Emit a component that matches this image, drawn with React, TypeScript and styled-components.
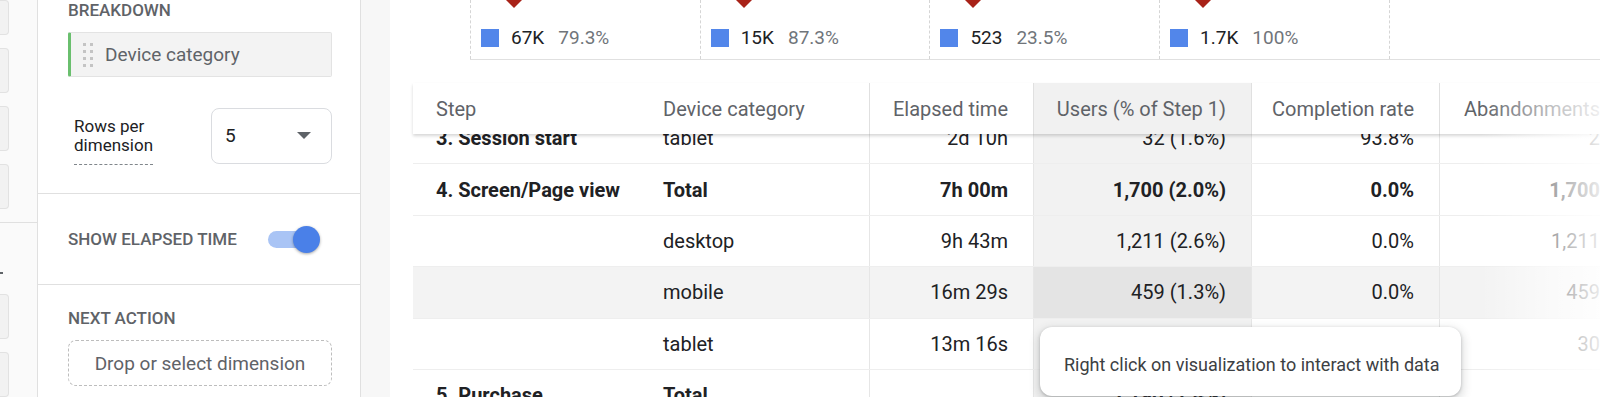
import React from 'react';
import styled, {createGlobalStyle} from 'styled-components';

const GlobalStyle = createGlobalStyle`
    html, body {
        margin: 0;
        padding: 0;
        background: #ffffff;
    }
    body {
        font-family: Roboto, "Liberation Sans", Arial, sans-serif;
        color: #202124;
        overflow: hidden;
    }
`

const PageBox = styled.div`
    display: flex;
    width: 1600px;
    height: 397px;
    overflow: hidden;
`

// far left rail with the clipped variable tiles
const RailBox = styled.div`
    width: 37px;
    flex-shrink: 0;
    background: #fafafa;
    border-right: 1px solid #e0e0e0;
    display: flex;
    flex-direction: column;
`

const RailGroup = styled.div<{$top: number; $height?: number}>`
    display: flex;
    flex-direction: column;
    gap: 13px;
    padding-top: ${props => props.$top}px;
    height: ${props => props.$height ? `${props.$height}px` : 'auto'};
    box-sizing: border-box;
    border-bottom: ${props => props.$height ? '1px solid #e0e0e0' : 'none'};
`

const RailTile = styled.div<{$h: number}>`
    width: 9px;
    height: ${props => props.$h}px;
    background: #f2f2f2;
    border: 1px solid #e2e2e2;
    border-left: none;
    border-radius: 0 4px 4px 0;
    box-sizing: border-box;
`

const RailDash = styled.div`
    width: 3px;
    height: 2px;
    background: #5f6368;
    margin-bottom: 7px;
`

const SidePanel = styled.div`
    width: 322px;
    flex-shrink: 0;
    border-right: 1px solid #e0e0e0;
    display: flex;
    flex-direction: column;
`

const SideSection = styled.div<{$height?: number}>`
    padding: 0 28px 0 30px;
    height: ${props => props.$height ? `${props.$height}px` : 'auto'};
    box-sizing: border-box;
    border-bottom: ${props => props.$height ? '1px solid #e0e0e0' : 'none'};
    display: flex;
    flex-direction: column;
`

const SectionLabel = styled.div<{$mt?: number}>`
    font-size: 17px;
    font-weight: 500;
    line-height: 20px;
    color: #5f6368;
    text-transform: uppercase;
    margin-top: ${props => props.$mt ?? 0}px;
`

const DimensionChip = styled.div`
    margin-top: 12px;
    height: 45px;
    box-sizing: border-box;
    background: #f3f3f3;
    border: 1px solid #e3e3e3;
    border-left: 3px solid #6abf6e;
    border-radius: 2px;
    display: flex;
    align-items: center;
    padding-left: 12px;
    gap: 12px;
    font-size: 19px;
    color: #5f6368;
`

const RowsLine = styled.div`
    margin-top: 29px;
    display: flex;
    align-items: center;
    justify-content: space-between;
`

const RowsLabel = styled.div`
    margin-left: 6px;
    font-size: 17px;
    line-height: 19px;
    color: #202124;
    padding: 11px 0 9px;
    border-bottom: 1px dashed #80868b;
`

const SelectBox = styled.div`
    width: 121px;
    height: 56px;
    box-sizing: border-box;
    border: 1px solid #dadce0;
    border-radius: 8px;
    display: flex;
    align-items: center;
    justify-content: space-between;
    padding: 0 20px 0 13px;
    font-size: 19px;
    color: #202124;
`

const SelectArrow = styled.div`
    width: 0;
    height: 0;
    border-left: 7px solid transparent;
    border-right: 7px solid transparent;
    border-top: 7px solid #5f6368;
`

const ToggleRow = styled.div`
    height: 100%;
    display: flex;
    align-items: center;
    justify-content: space-between;
    padding-right: 12px;
`

const ToggleBox = styled.div`
    position: relative;
    width: 52px;
    height: 27px;
`

const ToggleTrack = styled.div`
    position: absolute;
    left: 0;
    top: 5px;
    width: 40px;
    height: 17px;
    border-radius: 9px;
    background: #a9c4f5;
`

const ToggleKnob = styled.div`
    position: absolute;
    right: 0;
    top: 0;
    width: 27px;
    height: 27px;
    border-radius: 50%;
    background: #4a80e8;
    box-shadow: 0 1px 3px rgba(0, 0, 0, 0.35);
`

const DropZone = styled.div`
    margin-top: 12px;
    height: 46px;
    box-sizing: border-box;
    border: 1px dashed #bdbdbd;
    border-radius: 8px;
    display: flex;
    align-items: center;
    justify-content: center;
    font-size: 19px;
    color: #5f6368;
`

const Gutter = styled.div`
    width: 29px;
    flex-shrink: 0;
    background: #f7f7f7;
`

const MainBox = styled.div`
    flex: 1;
    position: relative;
    overflow: hidden;
    background: #ffffff;
`

const ChartStrip = styled.div`
    margin-left: 80px;
    height: 60px;
    box-sizing: border-box;
    border-bottom: 1px solid #e0e0e0;
    display: flex;
`

const ChartColumn = styled.div`
    width: 229.7px;
    flex-shrink: 0;
    box-sizing: border-box;
    border-left: 1px dashed #d5d5d5;
    display: flex;
    flex-direction: column;
`

const DropMarker = styled.svg`
    display: block;
    margin-left: 35px;
`

const MarkerSpacer = styled.div`
    height: 8px;
`

const LegendRow = styled.div`
    margin-top: 20px;
    margin-left: 10px;
    display: flex;
    align-items: center;
    font-size: 19px;
    line-height: 20px;
`

const LegendSwatch = styled.div`
    width: 18px;
    height: 18px;
    background: #5286ea;
    margin-right: 12px;
`

const LegendValue = styled.span`
    color: #202124;
    margin-right: 14px;
`

const LegendPercent = styled.span`
    color: #70757a;
`

const COLS = '227px 229px 164px 218px 188px 186px';

const TableBox = styled.div`
    margin-top: 23px;
    margin-left: 23px;
    width: 1212px;
`

const HeaderRow = styled.div`
    position: relative;
    z-index: 1;
    display: grid;
    grid-template-columns: ${COLS};
    height: 51px;
    background: #ffffff;
    box-shadow: 0 2px 3px rgba(0, 0, 0, 0.16);
`

const HeaderCell = styled.div<{$right?: boolean; $line?: boolean; $users?: boolean}>`
    display: flex;
    align-items: center;
    justify-content: ${props => props.$right ? 'flex-end' : 'flex-start'};
    padding: ${props => props.$right ? '0 25px 0 0' : '0 0 0 23px'};
    font-size: 20px;
    color: #5f6368;
    white-space: nowrap;
    border-left: ${props => props.$line ? '1px solid #e0e0e0' : 'none'};
    background: ${props => props.$users ? '#f1f1f1' : 'transparent'};
`

const BodyBox = styled.div`
    margin-top: -21px;
`

const BodyRow = styled.div<{$hover?: boolean}>`
    display: grid;
    grid-template-columns: ${COLS};
    height: 51.4px;
    box-sizing: border-box;
    border-bottom: 1px solid #eeeeee;
    background: ${props => props.$hover ? '#f3f3f3' : '#ffffff'};
`

const BodyCell = styled.div<{$right?: boolean; $bold?: boolean; $line?: boolean; $users?: boolean; $hover?: boolean}>`
    display: flex;
    align-items: center;
    justify-content: ${props => props.$right ? 'flex-end' : 'flex-start'};
    padding: ${props => props.$right ? '0 25px 0 0' : '0 0 0 23px'};
    font-size: 20px;
    font-weight: ${props => props.$bold ? 700 : 400};
    color: #202124;
    white-space: nowrap;
    border-left: ${props => props.$line ? '1px solid #e6e6e6' : 'none'};
    background: ${props => props.$users ? (props.$hover ? '#e4e4e4' : '#f2f2f2') : 'transparent'};
`

const RightFade = styled.div`
    position: absolute;
    right: 0;
    top: 83px;
    bottom: 0;
    width: 120px;
    pointer-events: none;
    z-index: 2;
    background: linear-gradient(to right, rgba(255, 255, 255, 0) 0%, rgba(255, 255, 255, 0.55) 55%, rgba(255, 255, 255, 0.9) 100%);
`

const HintTooltip = styled.div`
    position: absolute;
    left: 650px;
    top: 327px;
    width: 421px;
    height: 69px;
    box-sizing: border-box;
    z-index: 3;
    background: #ffffff;
    border-radius: 12px;
    box-shadow: 0 1px 3px rgba(60, 64, 67, 0.3), 0 4px 8px 3px rgba(60, 64, 67, 0.15);
    display: flex;
    align-items: center;
    padding: 5px 0 0 24px;
    font-size: 18px;
    color: #3c4043;
    white-space: nowrap;
`

const legend = [
    {value: '67K', percent: '79.3%', marker: true},
    {value: '15K', percent: '87.3%', marker: true},
    {value: '523', percent: '23.5%', marker: true},
    {value: '1.7K', percent: '100%', marker: true},
    {value: '', percent: '', marker: false},
];

interface IFunnelRow {
    step: string;
    device: string;
    elapsed: string;
    users: string;
    completion: string;
    abandonments: string;
    total?: boolean;
    hover?: boolean;
}

const rows: IFunnelRow[] = [
    {step: '3. Session start', device: 'tablet', elapsed: '2d 10h', users: '32 (1.6%)', completion: '93.8%', abandonments: '2'},
    {step: '4. Screen/Page view', device: 'Total', elapsed: '7h 00m', users: '1,700 (2.0%)', completion: '0.0%', abandonments: '1,700', total: true},
    {step: '', device: 'desktop', elapsed: '9h 43m', users: '1,211 (2.6%)', completion: '0.0%', abandonments: '1,211'},
    {step: '', device: 'mobile', elapsed: '16m 29s', users: '459 (1.3%)', completion: '0.0%', abandonments: '459', hover: true},
    {step: '', device: 'tablet', elapsed: '13m 16s', users: '30 (1.2%)', completion: '0.0%', abandonments: '30'},
    {step: '5. Purchase', device: 'Total', elapsed: '', users: '1,196 (1.4%)', completion: '', abandonments: '', total: true},
];

const GripIcon: React.FC = () => (
    <svg width="10" height="24" viewBox="0 0 10 24">
        {[0, 7, 14, 21].map(y => (
            <React.Fragment key={y}>
                <rect x="0" y={y} width="3" height="3" fill="#c4c4c4"/>
                <rect x="7" y={y} width="3" height="3" fill="#c4c4c4"/>
            </React.Fragment>
        ))}
    </svg>
)

const Rail: React.FC = () => (
    <RailBox>
        <RailGroup $top={0} $height={233}>
            <RailTile $h={35}/>
            <RailTile $h={45}/>
            <RailTile $h={45}/>
            <RailTile $h={45}/>
        </RailGroup>
        <RailGroup $top={49}>
            <RailDash/>
            <RailTile $h={45}/>
            <RailTile $h={45}/>
        </RailGroup>
    </RailBox>
)

const Settings: React.FC = () => (
    <SidePanel>
        <SideSection $height={194}>
            <SectionLabel>Breakdown</SectionLabel>
            <DimensionChip>
                <GripIcon/>
                <span>Device category</span>
            </DimensionChip>
            <RowsLine>
                <RowsLabel>Rows per<br/>dimension</RowsLabel>
                <SelectBox>
                    <span>5</span>
                    <SelectArrow/>
                </SelectBox>
            </RowsLine>
        </SideSection>
        <SideSection $height={91}>
            <ToggleRow>
                <SectionLabel>Show elapsed time</SectionLabel>
                <ToggleBox>
                    <ToggleTrack/>
                    <ToggleKnob/>
                </ToggleBox>
            </ToggleRow>
        </SideSection>
        <SideSection>
            <SectionLabel $mt={23}>Next action</SectionLabel>
            <DropZone>Drop or select dimension</DropZone>
        </SideSection>
    </SidePanel>
)

const Funnel: React.FC = () => (
    <ChartStrip>
        {legend.map((item, i) => (
            <ChartColumn key={i}>
                {item.marker ? (
                    <DropMarker width="16" height="8" viewBox="0 0 16 8">
                        <polygon points="0,0 16,0 8,8" fill="#a82218"/>
                    </DropMarker>
                ) : <MarkerSpacer/>}
                {item.value && (
                    <LegendRow>
                        <LegendSwatch/>
                        <LegendValue>{item.value}</LegendValue>
                        <LegendPercent>{item.percent}</LegendPercent>
                    </LegendRow>
                )}
            </ChartColumn>
        ))}
    </ChartStrip>
)

const FunnelTable: React.FC = () => (
    <TableBox>
        <HeaderRow>
            <HeaderCell>Step</HeaderCell>
            <HeaderCell>Device category</HeaderCell>
            <HeaderCell $right $line>Elapsed time</HeaderCell>
            <HeaderCell $right $line $users>Users (% of Step 1)</HeaderCell>
            <HeaderCell $right $line>Completion rate</HeaderCell>
            <HeaderCell $right $line>Abandonments</HeaderCell>
        </HeaderRow>
        <BodyBox>
            {rows.map((row, i) => (
                <BodyRow key={i} $hover={row.hover}>
                    <BodyCell $bold>{row.step}</BodyCell>
                    <BodyCell $bold={row.total}>{row.device}</BodyCell>
                    <BodyCell $right $line $bold={row.total}>{row.elapsed}</BodyCell>
                    <BodyCell $right $line $users $hover={row.hover} $bold={row.total}>{row.users}</BodyCell>
                    <BodyCell $right $line $bold={row.total}>{row.completion}</BodyCell>
                    <BodyCell $right $line $bold={row.total}>{row.abandonments}</BodyCell>
                </BodyRow>
            ))}
        </BodyBox>
    </TableBox>
)

export default function App() {
    return (
        <>
            <GlobalStyle/>
            <PageBox>
                <Rail/>
                <Settings/>
                <Gutter/>
                <MainBox>
                    <Funnel/>
                    <FunnelTable/>
                    <RightFade/>
                    <HintTooltip>Right click on visualization to interact with data</HintTooltip>
                </MainBox>
            </PageBox>
        </>
    );
}
